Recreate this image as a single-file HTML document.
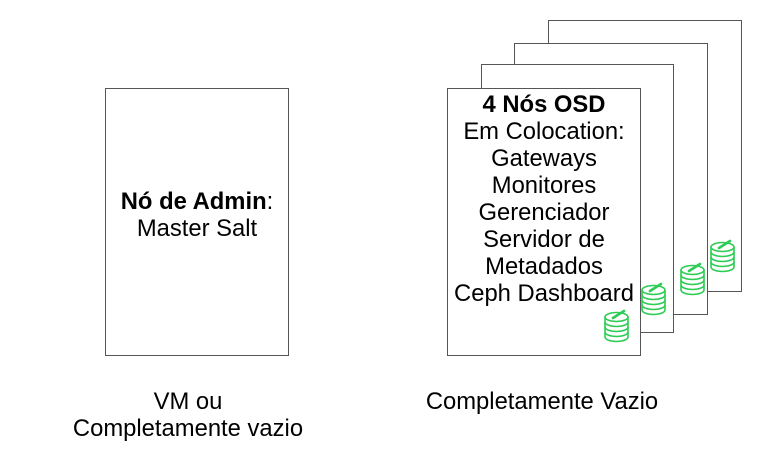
<!DOCTYPE html>
<html><head><style>
body{margin:0;width:768px;height:461px;background:#fff;position:relative;overflow:hidden;font-family:"Liberation Sans",sans-serif;font-size:23.8px;color:#000}
.b{position:absolute;border:1px solid #555;background:#fff;box-sizing:border-box}
.t{position:absolute;text-align:center;line-height:27px;white-space:nowrap}
svg{position:absolute}
</style></head><body>
<div class="b" style="left:105px;top:88px;width:184px;height:268px"></div>
<div class="t" style="left:105px;top:188px;width:184px"><b>Nó de Admin</b>:<br>Master Salt</div>
<div class="b" style="left:548px;top:20px;width:194px;height:272px"></div>
<div class="b" style="left:514px;top:43px;width:194px;height:272px"></div>
<div class="b" style="left:481px;top:64px;width:193px;height:269px"></div>
<div class="b" style="left:447px;top:88px;width:194px;height:268px"></div>
<div class="t" style="left:447px;top:91px;width:194px"><b>4 Nós OSD</b><br>Em Colocation:<br>Gateways<br>Monitores<br>Gerenciador<br>Servidor de<br>Metadados<br>Ceph Dashboard</div>
<svg width="0" height="0"><defs><g id="d" fill="#fff" stroke="#2ecc55" stroke-width="1.6">
<path d="M1 8v20a11.5 4.5 0 0 0 23 0V8"/>
<path d="M1 13a11.5 4.5 0 0 0 23 0M1 18a11.5 4.5 0 0 0 23 0M1 23a11.5 4.5 0 0 0 23 0" fill="none"/>
<ellipse cx="12.5" cy="8" rx="11.5" ry="4.5"/>
<path d="M9 9L20 2" stroke-width="2.6" stroke-linecap="round"/></g></defs></svg>
<svg style="left:604px;top:309px" width="26" height="34"><use href="#d"/></svg>
<svg style="left:641px;top:282px" width="26" height="34"><use href="#d"/></svg>
<svg style="left:680px;top:262px" width="26" height="34"><use href="#d"/></svg>
<svg style="left:710px;top:239px" width="26" height="34"><use href="#d"/></svg>
<div class="t" style="left:38px;top:388px;width:300px">VM ou<br>Completamente vazio</div>
<div class="t" style="left:392px;top:388px;width:300px">Completamente Vazio</div>
</body></html>
